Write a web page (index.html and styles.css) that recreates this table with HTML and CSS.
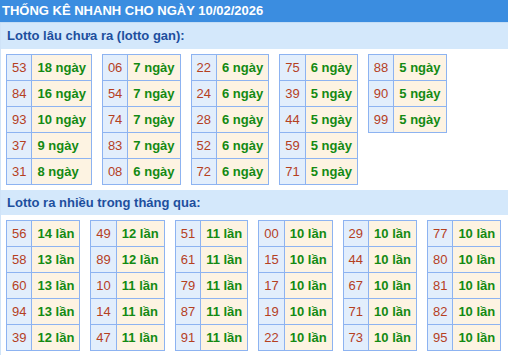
FILE: index.html
```html
<!DOCTYPE html>
<html lang="vi">
<head>
<meta charset="utf-8">
<title>Thống kê nhanh</title>
<link rel="stylesheet" href="styles.css">
</head>
<body>
<div class="header">THỐNG KÊ NHANH CHO NGÀY 10/02/2026</div>
<div class="content">
  <div class="band band-first">Lotto lâu chưa ra (lotto gan):</div>
  <div class="tables">
    <table class="stat"><tbody>
      <tr><td class="num">53</td><td class="val">18 ngày</td></tr>
      <tr><td class="num">84</td><td class="val">16 ngày</td></tr>
      <tr><td class="num">93</td><td class="val">10 ngày</td></tr>
      <tr><td class="num">37</td><td class="val">9 ngày</td></tr>
      <tr><td class="num">31</td><td class="val">8 ngày</td></tr>
    </tbody></table>
    <table class="stat"><tbody>
      <tr><td class="num">06</td><td class="val">7 ngày</td></tr>
      <tr><td class="num">54</td><td class="val">7 ngày</td></tr>
      <tr><td class="num">74</td><td class="val">7 ngày</td></tr>
      <tr><td class="num">83</td><td class="val">7 ngày</td></tr>
      <tr><td class="num">08</td><td class="val">6 ngày</td></tr>
    </tbody></table>
    <table class="stat"><tbody>
      <tr><td class="num">22</td><td class="val">6 ngày</td></tr>
      <tr><td class="num">24</td><td class="val">6 ngày</td></tr>
      <tr><td class="num">28</td><td class="val">6 ngày</td></tr>
      <tr><td class="num">52</td><td class="val">6 ngày</td></tr>
      <tr><td class="num">72</td><td class="val">6 ngày</td></tr>
    </tbody></table>
    <table class="stat"><tbody>
      <tr><td class="num">75</td><td class="val">6 ngày</td></tr>
      <tr><td class="num">39</td><td class="val">5 ngày</td></tr>
      <tr><td class="num">44</td><td class="val">5 ngày</td></tr>
      <tr><td class="num">59</td><td class="val">5 ngày</td></tr>
      <tr><td class="num">71</td><td class="val">5 ngày</td></tr>
    </tbody></table>
    <table class="stat"><tbody>
      <tr><td class="num">88</td><td class="val">5 ngày</td></tr>
      <tr><td class="num">90</td><td class="val">5 ngày</td></tr>
      <tr><td class="num">99</td><td class="val">5 ngày</td></tr>
    </tbody></table>
  </div>

  <div class="band band-second">Lotto ra nhiều trong tháng qua:</div>
  <div class="tables">
    <table class="stat"><tbody>
      <tr><td class="num">56</td><td class="val">14 lần</td></tr>
      <tr><td class="num">58</td><td class="val">13 lần</td></tr>
      <tr><td class="num">60</td><td class="val">13 lần</td></tr>
      <tr><td class="num">94</td><td class="val">13 lần</td></tr>
      <tr><td class="num">39</td><td class="val">12 lần</td></tr>
    </tbody></table>
    <table class="stat"><tbody>
      <tr><td class="num">49</td><td class="val">12 lần</td></tr>
      <tr><td class="num">89</td><td class="val">12 lần</td></tr>
      <tr><td class="num">10</td><td class="val">11 lần</td></tr>
      <tr><td class="num">14</td><td class="val">11 lần</td></tr>
      <tr><td class="num">47</td><td class="val">11 lần</td></tr>
    </tbody></table>
    <table class="stat"><tbody>
      <tr><td class="num">51</td><td class="val">11 lần</td></tr>
      <tr><td class="num">61</td><td class="val">11 lần</td></tr>
      <tr><td class="num">79</td><td class="val">11 lần</td></tr>
      <tr><td class="num">87</td><td class="val">11 lần</td></tr>
      <tr><td class="num">91</td><td class="val">11 lần</td></tr>
    </tbody></table>
    <table class="stat"><tbody>
      <tr><td class="num">00</td><td class="val">10 lần</td></tr>
      <tr><td class="num">15</td><td class="val">10 lần</td></tr>
      <tr><td class="num">17</td><td class="val">10 lần</td></tr>
      <tr><td class="num">19</td><td class="val">10 lần</td></tr>
      <tr><td class="num">22</td><td class="val">10 lần</td></tr>
    </tbody></table>
    <table class="stat"><tbody>
      <tr><td class="num">29</td><td class="val">10 lần</td></tr>
      <tr><td class="num">44</td><td class="val">10 lần</td></tr>
      <tr><td class="num">67</td><td class="val">10 lần</td></tr>
      <tr><td class="num">71</td><td class="val">10 lần</td></tr>
      <tr><td class="num">73</td><td class="val">10 lần</td></tr>
    </tbody></table>
    <table class="stat"><tbody>
      <tr><td class="num">77</td><td class="val">10 lần</td></tr>
      <tr><td class="num">80</td><td class="val">10 lần</td></tr>
      <tr><td class="num">81</td><td class="val">10 lần</td></tr>
      <tr><td class="num">82</td><td class="val">10 lần</td></tr>
      <tr><td class="num">95</td><td class="val">10 lần</td></tr>
    </tbody></table>
  </div>
</div>
</body>
</html>
```

FILE: styles.css
```css
html, body {
  margin: 0;
  padding: 0;
  background: #ffffff;
}

body {
  font-family: "Liberation Sans", Arial, sans-serif;
  font-size: 13px;
}

.header {
  height: 22px;
  line-height: 22px;
  padding-left: 2px;
  background: #3b8de0;
  color: #ffffff;
  font-weight: bold;
  font-size: 13px;
  border-bottom: 1px solid #c4ddf5;
  white-space: nowrap;
}

.content {
  border-left: 1px solid #cfe3f8;
  padding-bottom: 6px;
}

.band {
  background: #d4e8fb;
  color: #1d4f9e;
  font-weight: bold;
  font-size: 13px;
  padding-left: 6px;
}

.band-first {
  height: 26px;
  line-height: 26px;
}

.band-second {
  height: 25px;
  line-height: 25px;
  margin-top: 5px;
}

.tables {
  display: flex;
  align-items: flex-start;
  gap: 10px;
  padding: 5px 5px 0 5px;
}

.stat {
  border-collapse: collapse;
}

.stat td {
  border: 1px solid #8db3f1;
  padding: 0 5px;
  line-height: 25px;
  height: 25px;
  white-space: nowrap;
}

.num {
  background: #e2eefc;
  color: #b5401f;
  text-align: center;
}

.val {
  background: #fdf3e2;
  color: #138a13;
  font-weight: bold;
}
```
